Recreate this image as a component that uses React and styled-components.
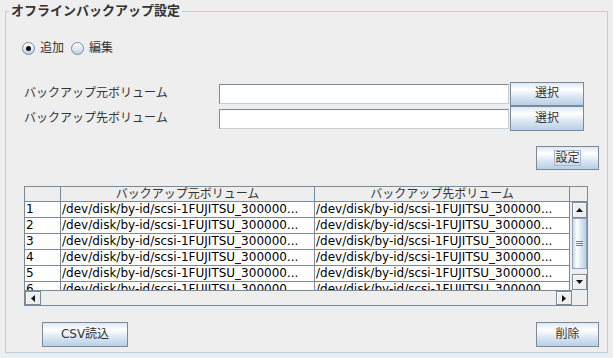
import React from 'react';
import styled, { createGlobalStyle } from 'styled-components';

// Metal (Ocean) look, flat colours

const FONT = `"DejaVu Sans", "Noto Sans CJK JP", sans-serif`;
const LINE = '#7a8a99';

const GlobalStyle = createGlobalStyle`
  html, body {
    margin: 0;
    padding: 0;
    background: #eeeeee;
  }
  body {
    font-family: ${FONT};
    font-size: 12px;
    color: #333333;
  }
  * {
    box-sizing: border-box;
  }
`;

const Window = styled.div`
  width: 613px;
  height: 358px;
  padding: 11px 5px 0 5px;
  overflow: hidden;
`;

const Panel = styled.div`
  position: relative;
  width: 603px;
  height: 342px;
  border: 1px solid #b8cfe5;
  padding: 0 8px 0 18px;
  display: flex;
  flex-direction: column;
`;

const Title = styled.div`
  position: absolute;
  top: -9px;
  left: 3px;
  padding: 0 2px;
  background: #eeeeee;
  font-size: 13px;
  font-weight: bold;
  line-height: 15px;
  color: #333333;
`;

const RadioRow = styled.div`
  display: flex;
  align-items: center;
  height: 13px;
  margin: 30px 0 0 -2px;
`;

const RadioItem = styled.label`
  display: flex;
  align-items: center;
  gap: 5px;
  margin-right: 7px;
  line-height: 15px;
`;

const RadioCircle = styled.span`
  position: relative;
  width: 13px;
  height: 13px;
  border-radius: 50%;
  border: 1px solid ${LINE};
  background: linear-gradient(to bottom, #ffffff 0%, #dde8f3 55%, #b8cfe5 100%);
  &::after {
    content: '';
    display: ${(p) => (p.checked ? 'block' : 'none')};
    position: absolute;
    left: 3px;
    top: 3px;
    width: 5px;
    height: 5px;
    border-radius: 50%;
    background: #111111;
  }
`;

const FormGrid = styled.div`
  display: grid;
  grid-template-columns: 194px 290px 74px;
  grid-template-rows: 25px 25px;
  column-gap: 1px;
  align-items: center;
  margin-top: 26px;
`;

const FieldLabel = styled.div`
  line-height: 15px;
  color: #333333;
`;

const TextField = styled.div`
  height: 20px;
  background: #ffffff;
  border: 1px solid ${LINE};
  border-right-color: #c4ccd4;
  border-bottom-color: #c4ccd4;
`;

const Button = styled.button`
  width: ${(p) => p.w || 74}px;
  height: ${(p) => p.h || 24}px;
  padding: 0;
  border: 1px solid ${LINE};
  background: linear-gradient(
    to bottom,
    #dde8f3 0%,
    #ffffff 30%,
    #dde8f3 60%,
    #b8cfe5 100%
  );
  font-family: ${FONT};
  font-size: 12px;
  color: #333333;
  line-height: 15px;
  margin-left: ${(p) => p.ml || 0}px;
`;

const SetRow = styled.div`
  display: flex;
  justify-content: flex-end;
  margin-top: 15px;
`;

const FocusText = styled.span`
  outline: 1px solid #a3b8cc;
  outline-offset: 0;
`;

const ScrollPane = styled.div`
  margin-top: 16px;
  width: 564px;
  height: 120px;
  border: 1px solid ${LINE};
  display: grid;
  grid-template-columns: 547px 15px;
  grid-template-rows: 15px 88px 15px;
`;

const HeaderRow = styled.div`
  grid-column: 1 / 3;
  display: grid;
  grid-template-columns: 36px 254px 255px 1fr;
  background: #eeeeee;
`;

const HeaderCell = styled.div`
  border-right: ${(p) => (p.last ? 'none' : `1px solid ${LINE}`)};
  border-bottom: 1px solid ${LINE};
  text-align: center;
  line-height: 14px;
  color: #333333;
  white-space: nowrap;
  overflow: hidden;
`;

const Viewport = styled.div`
  overflow: hidden;
  background: #eeeeee;
`;

const Rows = styled.div`
  display: grid;
  grid-template-columns: 36px 254px 255px;
  grid-auto-rows: 16px;
  width: 545px;
  background: #ffffff;
`;

const Cell = styled.div`
  border-right: 1px solid ${LINE};
  border-bottom: 1px solid ${LINE};
  padding-left: 1px;
  line-height: 15px;
  color: #000000;
  white-space: nowrap;
  overflow: hidden;
`;

const VBar = styled.div`
  display: flex;
  flex-direction: column;
  background: #eeeeee;
`;

const HBar = styled.div`
  display: flex;
  background: #eeeeee;
  border-top: 1px solid ${LINE};
`;

const Corner = styled.div`
  background: #eeeeee;
`;

const ArrowButton = styled.div`
  flex: 0 0 ${(p) => p.size || 16}px;
  display: flex;
  align-items: center;
  justify-content: center;
  background: #eeeeee;
  border: 1px solid ${LINE};
  box-shadow: inset 1px 1px 0 #ffffff;
`;

const Track = styled.div`
  flex: ${(p) => (p.grow ? '1 1 auto' : `0 0 ${p.size}px`)};
  background: #eeeeee;
`;

const Thumb = styled.div`
  flex: 0 0 51px;
  display: flex;
  align-items: center;
  justify-content: center;
  border: 1px solid #8da2bf;
  background: linear-gradient(
    to right,
    #c8d8ea 0%,
    #ffffff 30%,
    #dde8f3 60%,
    #b8cfe5 100%
  );
`;

const BottomRow = styled.div`
  display: flex;
  justify-content: space-between;
  align-items: center;
  margin-top: 16px;
`;

const Triangle = ({ dir }) => {
  const pts = {
    up: '0,4 7,4 3.5,0',
    down: '0,0 7,0 3.5,4',
    left: '4,0 4,7 0,3.5',
    right: '0,0 0,7 4,3.5',
  }[dir];
  const vertical = dir === 'up' || dir === 'down';
  return (
    <svg width={vertical ? 7 : 4} height={vertical ? 4 : 7} viewBox={vertical ? '0 0 7 4' : '0 0 4 7'}>
      <polygon points={pts} fill="#111111" />
    </svg>
  );
};

const Grip = () => (
  <svg width="7" height="5" viewBox="0 0 7 5">
    <rect x="0" y="0" width="7" height="1" fill="#6382bf" />
    <rect x="0" y="2" width="7" height="1" fill="#6382bf" />
    <rect x="0" y="4" width="7" height="1" fill="#6382bf" />
  </svg>
);

const PATH = '/dev/disk/by-id/scsi-1FUJITSU_300000...';
const rows = [1, 2, 3, 4, 5, 6];

const App = () => (
  <>
    <GlobalStyle />
    <Window>
      <Panel>
        <Title>オフラインバックアップ設定</Title>

        <RadioRow>
          <RadioItem>
            <RadioCircle checked />
            追加
          </RadioItem>
          <RadioItem>
            <RadioCircle />
            編集
          </RadioItem>
        </RadioRow>

        <FormGrid>
          <FieldLabel>バックアップ元ボリューム</FieldLabel>
          <TextField />
          <Button>選択</Button>
          <FieldLabel>バックアップ先ボリューム</FieldLabel>
          <TextField />
          <Button h={25}>選択</Button>
        </FormGrid>

        <SetRow>
          <Button w={63}>
            <FocusText>設定</FocusText>
          </Button>
        </SetRow>

        <ScrollPane>
          <HeaderRow>
            <HeaderCell />
            <HeaderCell>バックアップ元ボリューム</HeaderCell>
            <HeaderCell>バックアップ先ボリューム</HeaderCell>
            <HeaderCell last />
          </HeaderRow>
          <Viewport>
            <Rows>
              {rows.map((n) => (
                <React.Fragment key={n}>
                  <Cell>{n}</Cell>
                  <Cell>{PATH}</Cell>
                  <Cell>{PATH}</Cell>
                </React.Fragment>
              ))}
            </Rows>
          </Viewport>
          <VBar>
            <ArrowButton>
              <Triangle dir="up" />
            </ArrowButton>
            <Thumb>
              <Grip />
            </Thumb>
            <Track grow />
            <ArrowButton>
              <Triangle dir="down" />
            </ArrowButton>
          </VBar>
          <HBar>
            <ArrowButton>
              <Triangle dir="left" />
            </ArrowButton>
            <Track grow />
            <ArrowButton>
              <Triangle dir="right" />
            </ArrowButton>
          </HBar>
          <Corner />
        </ScrollPane>

        <BottomRow>
          <Button w={86} h={25} ml={18}>
            CSV読込
          </Button>
          <Button w={63} h={25}>
            削除
          </Button>
        </BottomRow>
      </Panel>
    </Window>
  </>
);

export default App;
